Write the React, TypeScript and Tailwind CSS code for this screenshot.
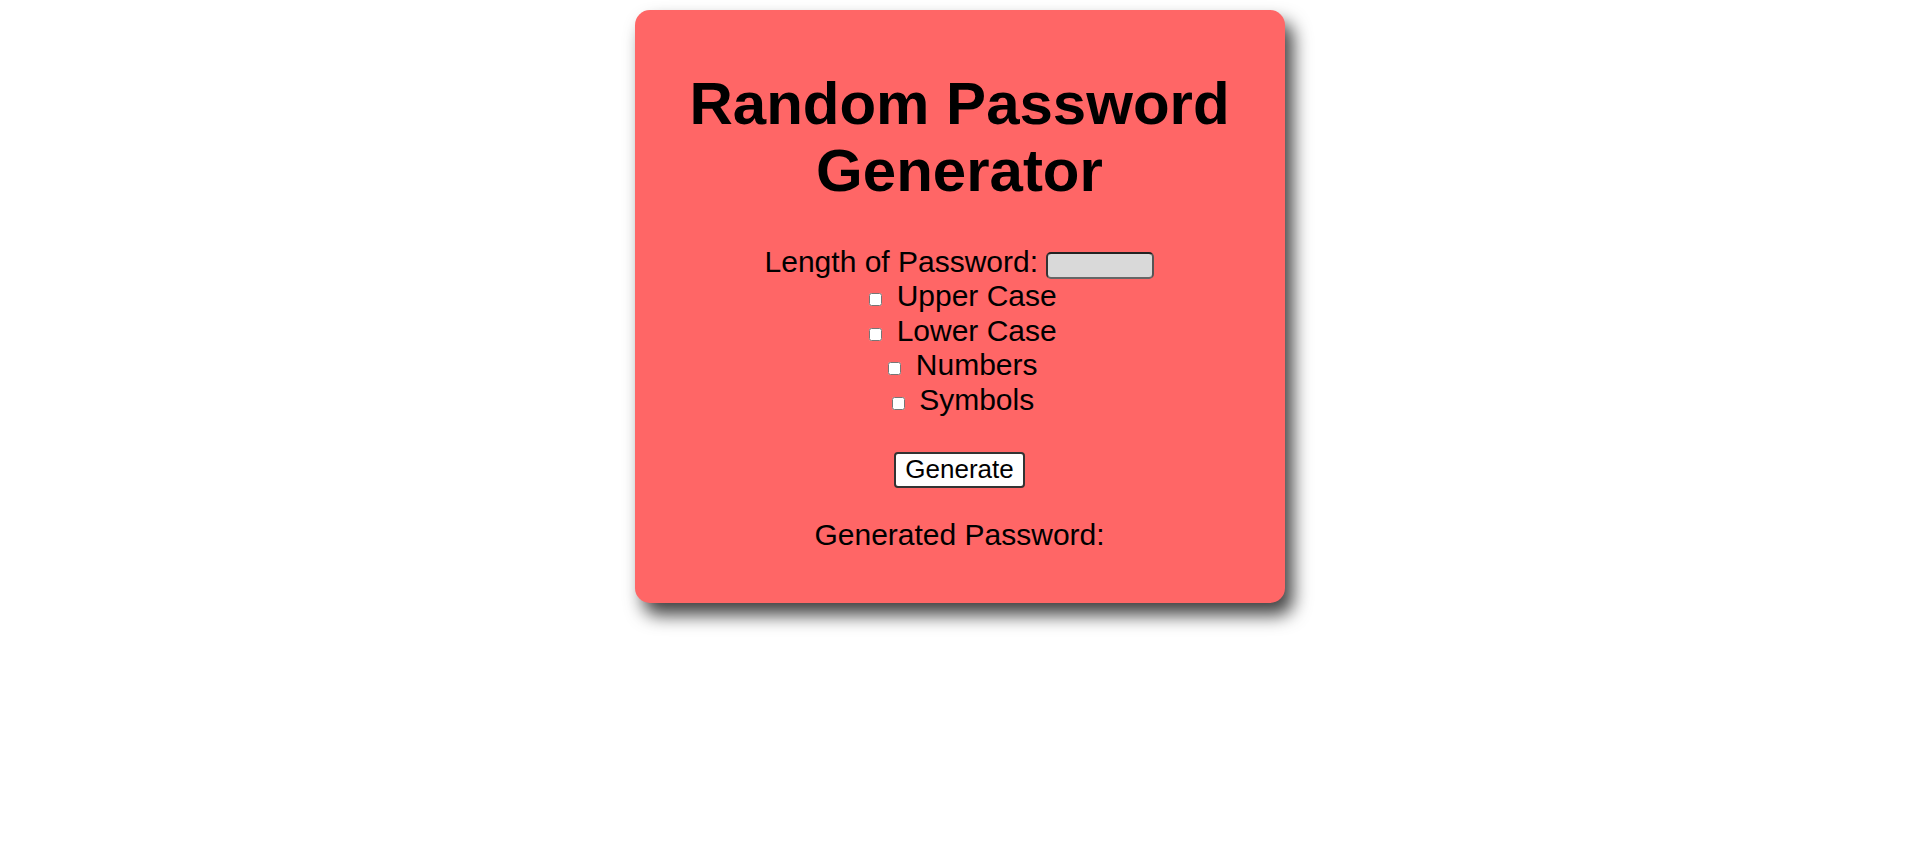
export default function App() {
  const options = ["Upper Case", "Lower Case", "Numbers", "Symbols"];

  return (
    <div className="min-h-screen bg-white pt-[10px] text-black font-['Liberation_Sans',Arial,sans-serif]">
      <div className="mx-auto w-[650px] rounded-[15px] bg-[#ff6666] p-[20px] text-center shadow-[8px_12px_18px_rgba(0,0,0,0.75)]">
        <h1 className="my-[39.5px] text-[60px] font-bold leading-[1.13]">
          Random Password Generator
        </h1>

        {/* Options */}
        <div className="text-[30px] leading-[1.15]">
          <div>
            Length of Password:{" "}
            <input
              type="text"
              className="inline-block h-[27px] w-[108px] rounded-[5px] border-2 border-t-[#222] border-l-[#333] border-r-[#555] border-b-[#666] bg-[#d9d9d9] align-bottom text-[13px] outline-none"
            />
          </div>
          {options.map((opt) => (
            <div key={opt}>
              <input type="checkbox" className="ml-[7px] mr-[6px]" /> {opt}
            </div>
          ))}
          <div className="h-[34.5px]" />
        </div>

        <div className="flex justify-center">
          <button className="rounded-[4px] border-2 border-[#333] bg-white px-[9px] py-[1.5px] text-[26px] leading-[1.15]">
            Generate
          </button>
        </div>

        <p className="my-[30px] text-[30px] leading-[1.15]">
          Generated Password: <span></span>
        </p>
      </div>
    </div>
  );
}
